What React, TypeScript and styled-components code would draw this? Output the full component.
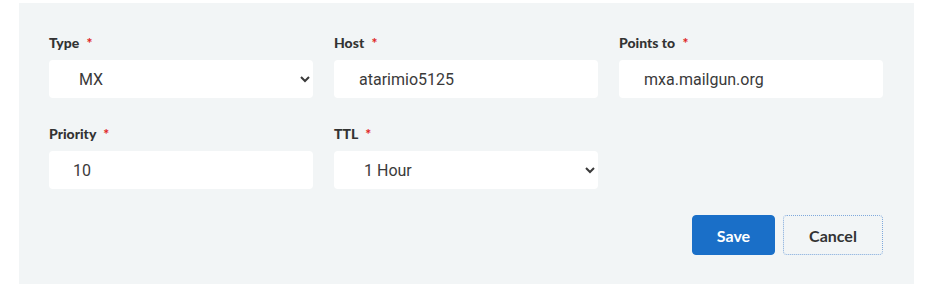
import styled, { createGlobalStyle } from 'styled-components';

const GlobalStyle = createGlobalStyle`
  body {
    margin: 0;
    background: #ffffff;
    font-family: 'Lato', 'Liberation Sans', sans-serif;
  }
`;

function App() {
  return (
    <>
      <GlobalStyle />
      <Panel>
        <FieldGrid>
          <Field>
            <Label>
              Type <Required>*</Required>
            </Label>
            <Select defaultValue='MX'>
              <option>A</option>
              <option>CNAME</option>
              <option>MX</option>
              <option>TXT</option>
            </Select>
          </Field>
          <Field>
            <Label>
              Host <Required>*</Required>
            </Label>
            <Input type='text' defaultValue='atarimio5125' />
          </Field>
          <Field>
            <Label>
              Points to <Required>*</Required>
            </Label>
            <Input type='text' defaultValue='mxa.mailgun.org' />
          </Field>
          <Field>
            <Label>
              Priority <Required>*</Required>
            </Label>
            <Input type='text' defaultValue='10' $indent={24} />
          </Field>
          <Field>
            <Label>
              TTL <Required>*</Required>
            </Label>
            <Select defaultValue='1 Hour'>
              <option>30 Minutes</option>
              <option>1 Hour</option>
              <option>1 Day</option>
            </Select>
          </Field>
        </FieldGrid>
        <Actions>
          <Button $primary>Save</Button>
          <Button>Cancel</Button>
        </Actions>
      </Panel>
    </>
  );
}

export default App;

const Panel = styled.div`
  margin: 3px 28px 16px 19px;
  padding: 31px 31px 30px 30px;
  background: #f2f5f6;
  box-sizing: border-box;
  height: 281px;
`;

const FieldGrid = styled.div`
  display: grid;
  grid-template-columns: repeat(3, 1fr);
  column-gap: 21px;
  row-gap: 27px;
`;

const Field = styled.div`
  display: flex;
  flex-direction: column;
  gap: 8px;
`;

const Label = styled.label`
  font-family: 'Lato', sans-serif;
  font-size: 14px;
  line-height: 18px;
  font-weight: 900;
  color: #333333;
`;

const Required = styled.span`
  color: #e02424;
  margin-left: 4px;
`;

const Input = styled.input<{ $indent?: number }>`
  height: 38px;
  box-sizing: border-box;
  border: none;
  border-radius: 4px;
  background: #ffffff;
  padding: 0 12px 0 ${(p) => p.$indent ?? 25}px;
  font-family: 'Roboto', sans-serif;
  font-size: 16px;
  color: #3a3a3a;
  outline: none;
`;

const Select = styled.select`
  height: 38px;
  box-sizing: border-box;
  border: none;
  border-radius: 4px;
  background: #ffffff;
  padding: 0 6px 0 26px;
  font-family: 'Roboto', sans-serif;
  font-size: 16px;
  color: #3a3a3a;
  outline: none;
`;

const Actions = styled.div`
  display: flex;
  justify-content: flex-end;
  gap: 8px;
  margin-top: 26px;
`;

const Button = styled.button<{ $primary?: boolean }>`
  height: 40px;
  box-sizing: border-box;
  padding: 0;
  width: ${(p) => (p.$primary ? 83 : 100)}px;
  border-radius: 4px;
  font-family: 'Lato', sans-serif;
  font-size: 16px;
  font-weight: 700;
  cursor: pointer;
  color: ${(p) => (p.$primary ? '#ffffff' : '#333333')};
  background: ${(p) => (p.$primary ? '#1a6fc8' : '#f2f5f6')};
  border: ${(p) => (p.$primary ? '1px solid #1a6fc8' : '1px dotted #7fa9dc')};
`;
